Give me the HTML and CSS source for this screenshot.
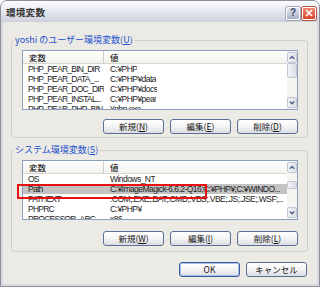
FILE: index.html
```html
<!DOCTYPE html>
<html lang="ja">
<head>
<meta charset="utf-8">
<title>環境変数</title>
<link rel="stylesheet" href="styles.css">
</head>
<body>
<div class="window">
  <div class="titlebar">
    <span class="title">環境変数</span>
    <div class="tb-buttons">
      <span class="tb-btn help">?</span>
      <span class="tb-btn close"><svg width="8" height="8" viewBox="0 0 8 8"><path d="M1 1 L7 7 M7 1 L1 7" stroke="#fff" stroke-width="1.7" fill="none"/></svg></span>
    </div>
  </div>
  <div class="client">
    <div class="group g1">
      <span class="legend">yoshi のユーザー環境変数(<u>U</u>)</span>
      <div class="list">
        <div class="list-main">
          <div class="hdr"><span class="c1">変数</span><span class="c2">値</span></div>
          <div class="row"><span class="c1">PHP_PEAR_BIN_DIR</span><span class="c2">C:¥PHP</span></div>
          <div class="row"><span class="c1">PHP_PEAR_DATA_...</span><span class="c2">C:¥PHP¥data</span></div>
          <div class="row"><span class="c1">PHP_PEAR_DOC_DIR</span><span class="c2">C:¥PHP¥docs</span></div>
          <div class="row"><span class="c1">PHP_PEAR_INSTAL...</span><span class="c2">C:¥PHP¥pear</span></div>
          <div class="row"><span class="c1">PHP_PEAR_PHP_BIN</span><span class="c2">¥php.exe</span></div>
        </div>
        <div class="vscroll">
          <div class="sb-btn"><svg width="9" height="9" viewBox="0 0 9 9"><path d="M2 6 L4.5 3.5 L7 6" stroke="#4d6185" stroke-width="1.6" fill="none"/></svg></div>
          <div class="sb-track"><div class="sb-thumb t1"></div></div>
          <div class="sb-btn"><svg width="9" height="9" viewBox="0 0 9 9"><path d="M2 3.5 L4.5 6 L7 3.5" stroke="#4d6185" stroke-width="1.6" fill="none"/></svg></div>
        </div>
      </div>
      <div class="btnrow">
        <span class="btn">新規(<u>N</u>)</span>
        <span class="btn">編集(<u>E</u>)</span>
        <span class="btn">削除(<u>D</u>)</span>
      </div>
    </div>

    <div class="group g2">
      <span class="legend">システム環境変数(<u>S</u>)</span>
      <div class="list">
        <div class="list-main">
          <div class="hdr"><span class="c1">変数</span><span class="c2">値</span></div>
          <div class="row"><span class="c1">OS</span><span class="c2">Windows_NT</span></div>
          <div class="row sel"><span class="c1">Path</span><span class="c2">C:¥ImageMagick-6.6.2-Q16;C:¥PHP¥;C:¥WINDO...</span></div>
          <div class="row"><span class="c1">PATHEXT</span><span class="c2">.COM;.EXE;.BAT;.CMD;.VBS;.VBE;.JS;.JSE;.WSF;...</span></div>
          <div class="row"><span class="c1">PHPRC</span><span class="c2">C:¥PHP¥</span></div>
          <div class="row"><span class="c1">PROCESSOR_ARC...</span><span class="c2">x86</span></div>
        </div>
        <div class="vscroll">
          <div class="sb-btn"><svg width="9" height="9" viewBox="0 0 9 9"><path d="M2 6 L4.5 3.5 L7 6" stroke="#4d6185" stroke-width="1.6" fill="none"/></svg></div>
          <div class="sb-track"><div class="sb-thumb t2"></div></div>
          <div class="sb-btn"><svg width="9" height="9" viewBox="0 0 9 9"><path d="M2 3.5 L4.5 6 L7 3.5" stroke="#4d6185" stroke-width="1.6" fill="none"/></svg></div>
        </div>
      </div>
      <div class="btnrow">
        <span class="btn">新規(<u>W</u>)</span>
        <span class="btn">編集(<u>I</u>)</span>
        <span class="btn">削除(<u>L</u>)</span>
      </div>
    </div>

    <div class="footer">
      <span class="btn default">OK</span>
      <span class="btn">キャンセル</span>
    </div>
  </div>
  <div class="annot"></div>
</div>
</body>
</html>
```

FILE: styles.css
```css
html, body {
  margin: 0;
  padding: 0;
  background: #ffffff;
}
body {
  font-family: "Liberation Sans", "Noto Sans CJK JP", sans-serif;
  font-size: 9px;
  color: #000;
}
.window {
  position: relative;
  box-sizing: border-box;
  width: 320px;
  height: 287px;
  border: 1px solid #8d8e96;
  border-radius: 7px 7px 0 0;
  background: #d9dae2;
  display: flex;
  flex-direction: column;
  overflow: hidden;
}
.titlebar {
  height: 21px;
  flex: none;
  display: flex;
  align-items: center;
  justify-content: space-between;
  padding: 0 3px 0 5px;
  background: linear-gradient(to bottom, #fbfbfd 0%, #eceef4 35%, #d9dbe5 75%, #cdd0dc 100%);
}
.title {
  font-family: "Noto Sans CJK JP", sans-serif;
  font-weight: bold;
  font-size: 9.5px;
  color: #333;
  letter-spacing: 0.3px;
}
.tb-buttons {
  display: flex;
  gap: 2px;
  margin-top: 3px;
}
.tb-btn {
  box-sizing: border-box;
  width: 14px;
  height: 13px;
  border: 1px solid #ffffff;
  border-radius: 2px;
  display: flex;
  align-items: center;
  justify-content: center;
  box-shadow: 0 0 0 1px #a3a7b8;
}
.help {
  background: linear-gradient(to bottom, #e3e6ef, #a9b0c6);
  color: #3b4466;
  font-weight: bold;
  font-size: 10px;
  line-height: 1;
}
.close {
  background: linear-gradient(to bottom, #f08a70, #d8432a);
  box-shadow: 0 0 0 1px #b65a4a;
}
.client {
  flex: 1;
  margin: 0 2px 2px 2px;
  background: #eceae5;
  display: flex;
  flex-direction: column;
}
.group {
  position: relative;
  box-sizing: border-box;
  margin: 0 9px 0 8px;
  border: 1px solid #d2d0c8;
  border-radius: 3px;
  display: flex;
  flex-direction: column;
  padding: 9px 9px 0 10px;
}
.g1 {
  margin-top: 18px;
  height: 98px;
}
.g2 {
  margin-top: 12px;
  height: 102px;
}
.legend {
  position: absolute;
  left: 2px;
  top: -7px;
  padding: 0 1px;
  background: #eceae5;
  color: #1a50d0;
  font-family: "Noto Sans CJK JP", sans-serif;
  font-size: 9px;
  line-height: 12px;
}
.list {
  height: 60px;
  box-sizing: border-box;
  border: 1px solid #8b9fbe;
  background: #fff;
  display: flex;
  overflow: hidden;
}
.list-main {
  flex: 1;
  overflow: hidden;
  display: flex;
  flex-direction: column;
}
.hdr {
  flex: none;
  height: 12px;
  display: flex;
  align-items: stretch;
  background: linear-gradient(to bottom, #ffffff, #f3f2ee);
  border-bottom: 1px solid #d9d7cc;
  font-family: "Noto Sans CJK JP", sans-serif;
  font-size: 8.5px;
  line-height: 12px;
}
.hdr .c1 {
  border-right: 1px solid #cfcdc4;
  padding-left: 6px;
}
.row {
  flex: none;
  height: 10px;
  display: flex;
  align-items: center;
  font-size: 8.5px;
  letter-spacing: -0.75px;
  white-space: nowrap;
  line-height: 10px;
  color: #222;
}
.c1 {
  box-sizing: border-box;
  width: 81px;
  flex: none;
  padding-left: 5px;
  overflow: hidden;
}
.c2 {
  padding-left: 6px;
  overflow: hidden;
  white-space: nowrap;
}
.row .c2 {
  letter-spacing: -0.55px;
}
.row.sel {
  background: #c3c3c3;
}
.vscroll {
  flex: none;
  width: 10px;
  display: flex;
  flex-direction: column;
  background: #f4f4f1;
  padding: 1px 0;
  box-sizing: border-box;
}
.sb-btn {
  flex: none;
  box-sizing: border-box;
  height: 11px;
  border: 1px solid #c2c6d4;
  border-radius: 2px;
  background: linear-gradient(to right, #f3f4f8, #dcdfe8);
  display: flex;
  align-items: center;
  justify-content: center;
}
.sb-track {
  flex: 1;
}
.sb-thumb {
  box-sizing: border-box;
  border: 1px solid #c2c6d4;
  border-radius: 2px;
  background: linear-gradient(to right, #f3f4f8, #dcdfe8);
}
.t1 {
  height: 15px;
}
.t2 {
  height: 8px;
  margin-top: 8px;
}
.btnrow {
  display: flex;
  justify-content: flex-end;
  gap: 6px;
  margin-top: 9px;
}
.g2 .btnrow {
  margin-top: 11px;
}
.btn {
  box-sizing: border-box;
  width: 61px;
  height: 15px;
  border: 1px solid #5a6f94;
  border-radius: 3px;
  background: linear-gradient(to bottom, #ffffff 0%, #f4f4f6 50%, #dcdde4 100%);
  display: flex;
  align-items: center;
  justify-content: center;
  font-family: "Noto Sans CJK JP", sans-serif;
  font-size: 8.5px;
  color: #111;
  line-height: 1;
}
.footer {
  display: flex;
  justify-content: flex-end;
  gap: 6px;
  margin: 10px 10px 0 0;
}
.btn.default {
  border-color: #3a5a9c;
  box-shadow: inset 0 0 0 1px #a9c1ea;
}
.annot {
  position: absolute;
  left: 16px;
  top: 183px;
  width: 190px;
  height: 15px;
  box-sizing: border-box;
  border: 2px solid #e81010;
}
```
